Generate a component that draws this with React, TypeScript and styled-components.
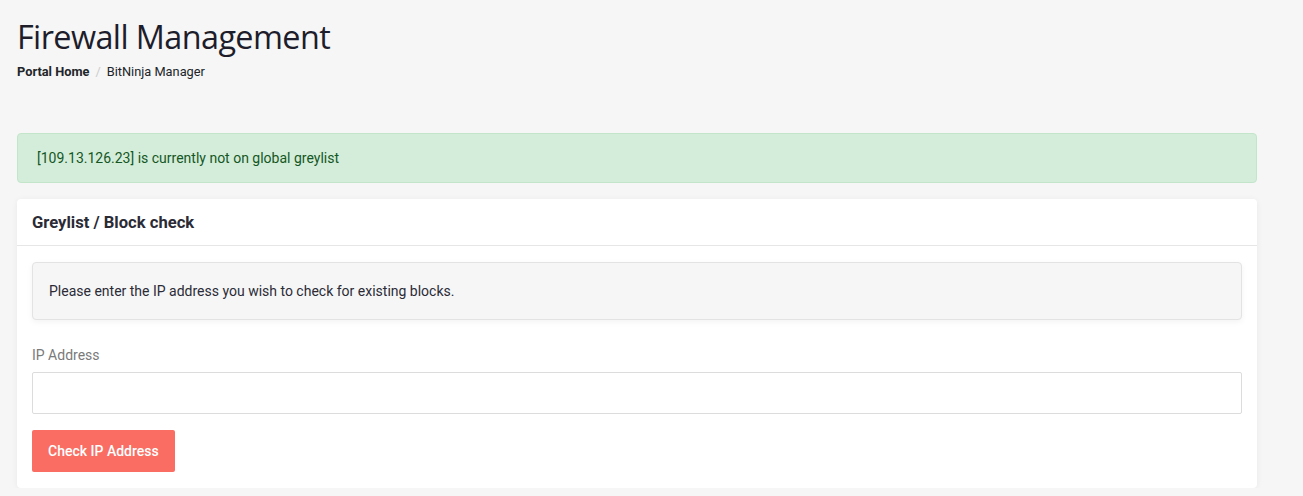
import React, { FC } from 'react';
import styled, { createGlobalStyle } from 'styled-components';

const GlobalStyle = createGlobalStyle`
    body {
        margin: 0;
        background: #f6f6f6;
        font-family: Roboto, 'Liberation Sans', sans-serif;
        color: #212529;
    }
`;

const Page = styled.div`
    padding: 0 46px 0 17px;
`;

const Header = styled.header`
    padding-top: 14px;
    height: 133px;
    box-sizing: border-box;
`;

const Title = styled.h1`
    margin: 0;
    font-family: 'Open Sans', sans-serif;
    font-weight: 400;
    font-size: 32.4px;
    line-height: 44px;
    color: #1d1d2b;
    letter-spacing: -0.6px;
`;

const Breadcrumb = styled.nav`
    display: flex;
    align-items: center;
    gap: 6px;
    margin-top: 6px;
    font-size: 12.8px;
    color: #212529;
`;

const Crumb = styled.span<{ $active?: boolean }>`
    font-weight: ${p => (p.$active ? 700 : 400)};
`;

const Divider = styled.span`
    color: #ccc;
`;

const Alert = styled.div`
    height: 50px;
    box-sizing: border-box;
    display: flex;
    align-items: center;
    padding: 0 19px;
    background: #d4edda;
    border: 1px solid #c3e6cb;
    border-radius: 4px;
    color: #155724;
    font-size: 14px;
    margin-bottom: 16px;
`;

const Card = styled.section`
    background: #fff;
    border-radius: 4px;
    box-shadow: 0 1px 6px rgba(0, 0, 0, 0.06);
`;

const CardHeader = styled.div`
    height: 47px;
    box-sizing: border-box;
    display: flex;
    align-items: center;
    padding: 0 15px;
    border-bottom: 1px solid #e6e6e6;
    font-size: 16.6px;
    font-weight: 700;
    color: #2b2b36;
`;

const CardBody = styled.div`
    padding: 16px 15px 16px;
`;

const Well = styled.div`
    height: 58px;
    box-sizing: border-box;
    display: flex;
    align-items: center;
    padding: 0 16px;
    background: #f6f6f6;
    border: 1px solid #e3e3e3;
    border-radius: 4px;
    box-shadow: 0 2px 6px rgba(0, 0, 0, 0.05);
    font-size: 14px;
    color: #2b2b36;
`;

const FormGroup = styled.div`
    margin-top: 27px;
`;

const Label = styled.label`
    display: block;
    font-size: 14px;
    color: #7a7a7a;
    margin-bottom: 9px;
`;

const Input = styled.input`
    display: block;
    width: 100%;
    height: 42px;
    box-sizing: border-box;
    border: 1px solid #dcdcdc;
    border-radius: 2px;
    background: #fff;
    outline: none;
    font-size: 14px;
`;

const Button = styled.button`
    margin-top: 16px;
    height: 42px;
    padding: 0 16px;
    border: none;
    border-radius: 2px;
    background: #f96d63;
    color: #fff;
    font-family: Roboto, sans-serif;
    font-size: 14px;
    font-weight: 500;
    cursor: pointer;
`;

const App: FC = () => (
    <>
        <GlobalStyle />
        <Page>
            <Header>
                <Title>Firewall Management</Title>
                <Breadcrumb>
                    <Crumb $active>Portal Home</Crumb>
                    <Divider>/</Divider>
                    <Crumb>BitNinja Manager</Crumb>
                </Breadcrumb>
            </Header>

            <Alert>[109.13.126.23] is currently not on global greylist</Alert>

            <Card>
                <CardHeader>Greylist / Block check</CardHeader>
                <CardBody>
                    <Well>Please enter the IP address you wish to check for existing blocks.</Well>
                    <FormGroup>
                        <Label htmlFor="ip">IP Address</Label>
                        <Input id="ip" type="text" />
                    </FormGroup>
                    <Button>Check IP Address</Button>
                </CardBody>
            </Card>
        </Page>
    </>
);

export default App;
